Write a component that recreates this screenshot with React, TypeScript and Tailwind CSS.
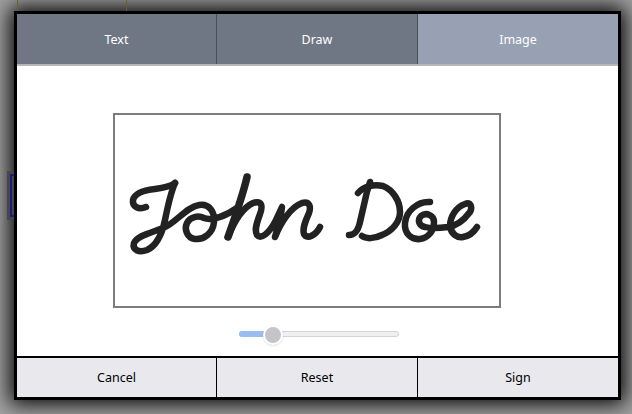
const tabs = ['Text', 'Draw', 'Image'];
const actions = ['Cancel', 'Reset', 'Sign'];

// handwritten signature, pen strokes in page pixels
const Signature = () => (
  <svg viewBox="115 115 384 191" className="h-[191px] w-[384px]" fill="none" stroke="#222222" strokeWidth="6.5" strokeLinecap="round" strokeLinejoin="round">
    <path d="M146 207 C139 210 132 207 133 200 C135 192 146 190 155 189 C163 188 170 187 175 183" />
    <path d="M175 183 C171 192 168 205 165 220 C162 234 156 246 147 250 C139 253 132 250 134 243 C137 236 150 233 163 228 C175 224 186 207 199 205 C209 203 215 212 214 222 C213 233 204 240 195 239 C187 238 184 229 187 223 C190 217 198 215 204 218 C212 221 226 216 237 208" />
    <path d="M247 177 C243 195 234 220 228 237" strokeWidth="7.5" />
    <path d="M228 237 C234 222 242 208 253 203 C262 200 263 206 260 214 C257 222 254 230 257 235 C261 240 269 233 275 222 L282 207 C281 218 277 229 275 237 C281 222 291 207 302 203 C310 201 311 207 309 213 C306 220 302 228 304 234 C307 240 316 235 320 227" />
    <path d="M349 235 C355 235 358 231 360 222 L366 196 C367 190 369 186 370 182" />
    <path d="M358 193 C364 186 374 184 383 186 C393 190 400 201 400 212 C400 222 392 231 382 235 C374 239 366 239 362 236" />
    <path d="M430 202 C418 201 406 211 405 223 C404 234 412 240 420 239 C428 238 434 231 434 222 C434 215 426 212 421 216 C417 220 419 226 425 227 C432 229 440 228 448 227 C456 226 464 220 470 212 C473 206 470 202 465 204 C456 207 450 217 450 226 C451 234 457 238 463 237 C469 236 474 232 477 227" />
  </svg>
);

export default function App() {
  return (
    <div className="relative h-[414px] w-[632px] overflow-hidden bg-[#a3a3a3] pl-[14px] pt-[11px] font-['Noto_Sans',sans-serif] text-[12.5px]">
      <div className="relative flex h-[389px] w-[607px] flex-col border-[3px] border-black bg-white shadow-[0_0_20px_4px_#000000]">
        <div className="flex h-[52px] border-b-2 border-[#b6b6b6]">
          {tabs.map((tab, i) => (
            <button
              key={tab}
              className={
                i === 2
                  ? 'flex-1 bg-[#98a0b3] pt-0.5 text-white'
                  : i === 0
                    ? 'w-[200px] border-r border-[#4a4e57] bg-[#6f7684] pt-0.5 text-white'
                    : 'w-[201px] border-r border-[#4a4e57] bg-[#6f7684] pt-0.5 text-white'
              }
            >
              {tab}
            </button>
          ))}
        </div>

        <div className="flex flex-1 flex-col items-start pt-[47px]">
          <div className="ml-[96px] h-[195px] w-[388px] border-2 border-[#7d7d7d] bg-white">
            <Signature />
          </div>
          <div className="relative ml-[222px] mt-[23px] h-[6px] w-[160px] rounded-full border border-[#d4d4d8] bg-[#f0f0f3]">
            <div className="absolute -left-px -top-px h-[6px] w-[30px] rounded-l-full bg-[#9bbcf0]" />
            <div className="absolute left-[23px] top-[-7px] h-[20px] w-[20px] rounded-full border-2 border-white bg-[#c4c4ca] shadow-sm" />
          </div>
        </div>

        <div className="flex h-[41px] border-t-2 border-black bg-[#e8e8ed]">
          {actions.map((action, i) => (
            <button
              key={action}
              className={
                i === 2
                  ? 'flex-1 pt-0.5 text-black'
                  : i === 0
                    ? 'w-[200px] border-r border-black pt-0.5 text-black'
                    : 'w-[201px] border-r border-black pt-0.5 text-black'
              }
            >
              {action}
            </button>
          ))}
        </div>
      </div>

      {/* bits of the page behind the dialog, seen through its shadow */}
      <div className="absolute left-[17px] top-0 h-[11px] w-[110px] border-x border-[#6b5f24]" />
      <div className="absolute left-[7px] top-[171px] h-[49px] w-[7px] bg-[#46464a] pl-[3px] pt-[3px]">
        <div className="h-[43px] w-[4px] border-y-2 border-l-2 border-[#1a1a80]" />
      </div>
    </div>
  );
}
